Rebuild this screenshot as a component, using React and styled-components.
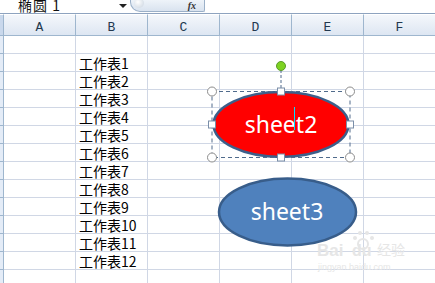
import React from 'react'
import styled, { createGlobalStyle } from 'styled-components'

const GlobalStyle = createGlobalStyle`
  html, body { margin: 0; padding: 0; background: #fff; overflow: hidden; }
  body { font-family: "Noto Sans CJK SC", "Noto Sans", sans-serif; }
`

const COLS = ['A', 'B', 'C', 'D', 'E', 'F']
const ROWS = 14
const sheetNames = Array.from({ length: 12 }, (_, i) => `工作表${i + 1}`)

const Page = styled.div`
  position: relative;
  width: 435px;
  height: 283px;
  overflow: hidden;
`

const TopBar = styled.div`
  height: 13px;
  border-bottom: 1px solid #8ea3bf;
  display: flex;
  align-items: center;
  position: relative;
`

const NameBox = styled.div`
  width: 112px;
  padding-left: 18px;
  font-size: 14px;
  line-height: 13px;
  color: #111;
  letter-spacing: 1px;
  margin-top: -2px;
`

const DropArrow = styled.div`
  width: 0;
  height: 0;
  border-left: 4px solid transparent;
  border-right: 4px solid transparent;
  border-top: 4px solid #222;
  margin-left: -11px;
  margin-top: -2px;
`

const FxPill = styled.div`
  margin-left: 3px;
  width: 75px;
  height: 12px;
  margin-top: -1px;
  border: 1px solid #9bb0c8;
  border-top: none;
  border-radius: 0 0 2px 10px;
  background: linear-gradient(#eef3f9, #d9e3ef);
  display: flex;
  align-items: center;
  justify-content: flex-end;
  padding-right: 8px;
  box-sizing: border-box;
  position: relative;
  font-family: "Liberation Serif", serif;
  font-style: italic;
  font-weight: bold;
  font-size: 10px;
  color: #333;
`

const Knob = styled.div`
  position: absolute;
  left: 3px;
  top: -2px;
  width: 10px;
  height: 10px;
  border-radius: 50%;
  background: radial-gradient(circle at 40% 40%, #fff, #c7d2de);
`

const Grid = styled.div`
  display: grid;
  grid-template-columns: 4px repeat(6, 72px);
`

const Corner = styled.div`
  height: 22px;
  box-sizing: border-box;
  border-top: 1px solid #fff;
  background: #c9d8ec;
  border-right: 1px solid #9eb6ce;
  border-bottom: 1px solid #9eb6ce;
`

const ColHead = styled.div`
  height: 22px;
  box-sizing: border-box;
  border-top: 1px solid #fff;
  background: linear-gradient(#f4f7fb, #dde6f2);
  border-right: 1px solid #9eb6ce;
  border-bottom: 1px solid #9eb6ce;
  display: flex;
  align-items: center;
  justify-content: center;
  padding-top: 5px;
  font-family: "Liberation Mono", monospace;
  font-size: 13px;
  color: #23384f;
`

const RowHead = styled.div`
  height: 18px;
  box-sizing: border-box;
  background: #e4ecf7;
  border-right: 1px solid #9eb6ce;
  border-bottom: 1px solid #9eb6ce;
`

const Cell = styled.div`
  height: 18px;
  box-sizing: border-box;
  border-right: 1px solid #d0d7e5;
  border-bottom: 1px solid #d0d7e5;
  padding-left: 3px;
  font-size: 14px;
  line-height: 18px;
  color: #000;
  white-space: nowrap;
  overflow: visible;
`

const Canvas = styled.svg`
  position: absolute;
  left: 0;
  top: 0;
`

const ShapeText = styled.text`
  font-family: "Noto Sans", "Open Sans", sans-serif;
  font-size: 23px;
  fill: #fff;
`

const Mark = styled.text`
  font-family: "Liberation Sans", "Noto Sans CJK SC", sans-serif;
  fill: #e6e6e6;
`

function Handle({ x, y, round }) {
  return round ? (
    <circle cx={x} cy={y} r="4.5" fill="#fff" stroke="#8c8c8c" strokeWidth="1" />
  ) : (
    <rect x={x - 3.5} y={y - 3.5} width="7" height="7" fill="#fff" stroke="#7a8ea8" strokeWidth="1" />
  )
}

export default function App() {
  return (
    <Page>
      <GlobalStyle />
      <TopBar>
        <NameBox>椭圆 1</NameBox>
        <DropArrow />
        <FxPill>
          <Knob />
          fx
        </FxPill>
      </TopBar>
      <Grid>
        <Corner />
        {COLS.map(c => <ColHead key={c}>{c}</ColHead>)}
        {Array.from({ length: ROWS }, (_, r) => (
          <React.Fragment key={r}>
            <RowHead />
            {COLS.map(c => (
              <Cell key={c}>{c === 'B' && r >= 1 && r <= 12 ? sheetNames[r - 1] : ''}</Cell>
            ))}
          </React.Fragment>
        ))}
      </Grid>

      <Canvas width="435" height="283" viewBox="0 0 435 283">
        {/* watermark */}
        <g>
          <circle cx="363" cy="244" r="5" fill="none" stroke="#e6e6e6" strokeWidth="2" />
          <circle cx="355" cy="238" r="2" fill="#e6e6e6" />
          <circle cx="360" cy="233" r="2" fill="#e6e6e6" />
          <circle cx="367" cy="233" r="2" fill="#e6e6e6" />
          <circle cx="372" cy="238" r="2" fill="#e6e6e6" />
          <Mark x="317" y="256" fontSize="17" fontWeight="bold">Bai</Mark>
          <Mark x="352" y="256" fontSize="16" fontWeight="bold">du</Mark>
          <Mark x="377" y="255" fontSize="14">经验</Mark>
          <Mark x="318" y="270" fontSize="9">jingyan.baidu.com</Mark>
        </g>

        {/* sheet3 */}
        <ellipse cx="287.5" cy="212" rx="68.5" ry="33.5" fill="#4f81bd" stroke="#385d8a" strokeWidth="2.5" />
        <ShapeText x="287" y="220" textAnchor="middle">sheet3</ShapeText>

        {/* sheet2 selected */}
        <ellipse cx="281" cy="124.5" rx="67.5" ry="32.5" fill="#ff0000" stroke="#3d5f8a" strokeWidth="2.5" />
        <ShapeText x="281" y="133" textAnchor="middle">sheet2</ShapeText>
        <line x1="294.5" y1="107" x2="294.5" y2="130" stroke="#00e0ff" strokeWidth="1" />
        <rect x="212" y="91.5" width="138" height="66" fill="none" stroke="#506b8c" strokeWidth="1" strokeDasharray="4 3" />
        <line x1="281" y1="70" x2="281" y2="91" stroke="#506b8c" strokeWidth="1" strokeDasharray="3 2" />
        <circle cx="281" cy="66" r="4.5" fill="#7ed321" stroke="#5a9a2a" strokeWidth="1" />
        <Handle x={212} y={91.5} round />
        <Handle x={350} y={91.5} round />
        <Handle x={212} y={157.5} round />
        <Handle x={350} y={157.5} round />
        <Handle x={281} y={91.5} />
        <Handle x={281} y={157.5} />
        <Handle x={212} y={124.5} />
        <Handle x={350} y={124.5} />
      </Canvas>
    </Page>
  )
}
